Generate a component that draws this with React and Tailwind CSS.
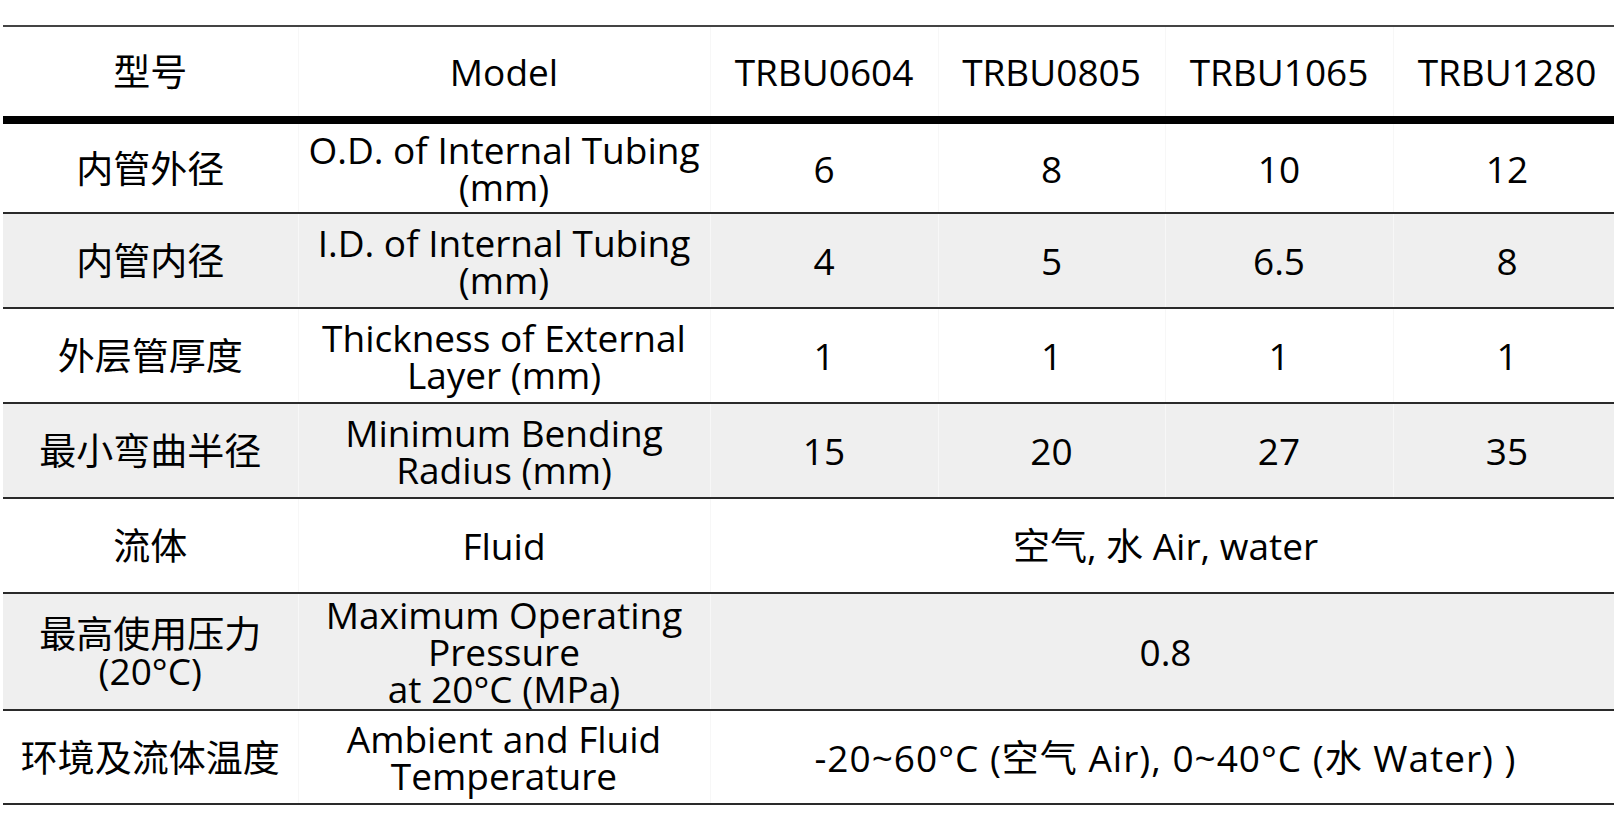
import React from 'react';

const models = ['TRBU0604', 'TRBU0805', 'TRBU1065', 'TRBU1280'];

const rows = [
  { zh: ['内管外径'], en: ['O.D. of Internal Tubing', '(mm)'], values: ['6', '8', '10', '12'], h: 'h-[93px]', bg: 'bg-white' },
  { zh: ['内管内径'], en: ['I.D. of Internal Tubing', '(mm)'], values: ['4', '5', '6.5', '8'], h: 'h-[95px]', bg: 'bg-[#efefef]' },
  { zh: ['外层管厚度'], en: ['Thickness of External', 'Layer (mm)'], values: ['1', '1', '1', '1'], h: 'h-[95px]', bg: 'bg-white' },
  { zh: ['最小弯曲半径'], en: ['Minimum Bending', 'Radius (mm)'], values: ['15', '20', '27', '35'], h: 'h-[95px]', bg: 'bg-[#efefef]' },
  { zh: ['流体'], en: ['Fluid'], span: '空气, 水 Air, water', h: 'h-[95px]', bg: 'bg-white' },
  { zh: ['最高使用压力', '(20°C)'], en: ['Maximum Operating', 'Pressure', 'at 20°C (MPa)'], span: '0.8', h: 'h-[117px]', bg: 'bg-[#efefef]' },
  { zh: ['环境及流体温度'], en: ['Ambient and Fluid', 'Temperature'], span: '-20~60°C (空气 Air), 0~40°C (水 Water) )', wide: true, h: 'h-[94px]', bg: 'bg-white' },
];

const Lines = ({ lines }) => (
  <>
    {lines.map((l, i) => (
      <span key={i} className="block whitespace-nowrap">{l}</span>
    ))}
  </>
);

const cell = 'p-0 text-center align-middle border-x border-x-[#f7f7f7] first:border-l-0';

export default function App() {
  return (
    <div
      className="w-[1614px] h-[834px] overflow-hidden bg-white pl-[3px] pt-[25px] text-black"
      style={{ fontFamily: '"Open Sans", "Noto Sans CJK SC", sans-serif' }}
    >
      <table className="w-[1618px] table-fixed border-collapse border-t-2 border-t-[#444] text-[37px] leading-[37px]">
        <colgroup>
          <col className="w-[295px]" />
          <col className="w-[412px]" />
          <col className="w-[228px]" />
          <col className="w-[227px]" />
          <col className="w-[228px]" />
          <col className="w-[228px]" />
        </colgroup>
        <thead>
          <tr className="h-[94px] border-b-8 border-b-black bg-white">
            <th className={`${cell} font-normal`}>型号</th>
            <th className={`${cell} font-normal`}>Model</th>
            {models.map((m) => (
              <th key={m} className={`${cell} font-normal`}>{m}</th>
            ))}
          </tr>
        </thead>
        <tbody>
          {rows.map((r, i) => (
            <tr key={i} className={`${r.h} ${r.bg} border-b-2 border-b-[#2a2a2a]`}>
              <td className={cell}><Lines lines={r.zh} /></td>
              <td className={cell}><Lines lines={r.en} /></td>
              {r.span ? (
                <td colSpan={4} className={`${cell} ${r.wide ? 'tracking-[1px]' : ''}`}>{r.span}</td>
              ) : (
                r.values.map((v, j) => (
                  <td key={j} className={cell}>{v}</td>
                ))
              )}
            </tr>
          ))}
        </tbody>
      </table>
    </div>
  );
}
